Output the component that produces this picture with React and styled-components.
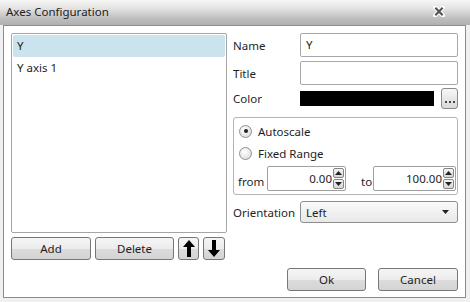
import React from "react";
import styled, { createGlobalStyle } from "styled-components";

const Global = createGlobalStyle`
  html, body { margin: 0; padding: 0; background: #f0f0f0; }
  body { font-family: "Noto Sans", "Open Sans", sans-serif; font-size: 11.5px; color: #1e1e1e; }
  * { box-sizing: border-box; }
`;

const Window = styled.div`
  width: 470px;
  height: 302px;
  display: flex;
  flex-direction: column;
  background: #f0f0f0;
`;

const TitleBar = styled.div`
  height: 25px;
  display: flex;
  align-items: center;
  justify-content: space-between;
  padding: 0 25px 2px 6px;
  background: linear-gradient(#f7f7f7 0%, #e2e2e2 35%, #bdbdbd 75%, #b0b0b0 100%);
  color: #222;
`;

const Body = styled.div`
  margin: 0 0 0 3px;
  width: 463px;
  height: 273px;
  border: 1px solid #8c8c8c;
  background: #fff;
  padding: 7px 7px 6px 7px;
  display: grid;
  grid-template-columns: 216px minmax(0, 1fr);
  column-gap: 6px;
`;

const LeftCol = styled.div`
  display: flex;
  flex-direction: column;
  gap: 4px;
`;

const ListBox = styled.div`
  height: 200px;
  border: 1px solid #a5a5a5;
  border-radius: 2px;
  padding: 1px;
`;

const ListItem = styled.div`
  height: 22px;
  line-height: 22px;
  padding-left: 4px;
  background: ${(p) => (p.$selected ? "#cbe3ec" : "transparent")};
  border-radius: 2px;
`;

const ButtonRow = styled.div`
  display: flex;
  gap: 4px;
`;

const Button = styled.button`
  width: ${(p) => p.$w}px;
  height: 23px;
  padding: 0;
  border: 1px solid #777;
  border-radius: 3px;
  background: linear-gradient(#f5f5f5 0%, #ececec 50%, #dcdcdc 51%, #d4d4d4 100%);
  font-family: inherit;
  font-size: 11.5px;
  color: #1e1e1e;
  display: flex;
  align-items: center;
  justify-content: center;
`;

const RightCol = styled.div`
  display: flex;
  flex-direction: column;
  min-width: 0;
`;

const FieldRow = styled.div`
  display: grid;
  grid-template-columns: 67px minmax(0, 1fr);
  align-items: center;
  height: ${(p) => p.$h}px;
  margin-bottom: ${(p) => p.$mb}px;
`;

const TextBox = styled.div`
  height: 24px;
  border: 1px solid #a8a8a8;
  border-radius: 2px;
  padding: 0 5px;
  line-height: 22px;
  background: #fff;
`;

const ColorCell = styled.div`
  display: flex;
  align-items: center;
  justify-content: space-between;
`;

const Swatch = styled.div`
  width: 134px;
  height: 15px;
  background: #000;
`;

const DotsButton = styled.div`
  width: 17px;
  height: 21px;
  border: 1px solid #8a8a8a;
  border-radius: 3px;
  background: linear-gradient(#f7f7f7, #d9d9d9);
  display: flex;
  align-items: flex-end;
  justify-content: center;
  padding-bottom: 5px;
  gap: 2px;
`;

const Dot = styled.span`
  width: 2px;
  height: 2px;
  background: #3a4a5a;
`;

const Group = styled.div`
  height: 78px;
  border: 1px solid #b4b4b4;
  border-radius: 3px;
  padding: 2px 0 0 4px;
  margin-bottom: 6px;
`;

const RadioRow = styled.div`
  display: flex;
  align-items: center;
  gap: 6px;
  height: 22px;
  padding-left: 1px;
`;

const RadioCircle = styled.span`
  width: 13px;
  height: 13px;
  border-radius: 50%;
  border: 1px solid #8f8f8f;
  background: radial-gradient(circle at 40% 35%, #ffffff 0%, #e6e6e6 60%, #cfcfcf 100%);
  display: flex;
  align-items: center;
  justify-content: center;
  &::after {
    content: "";
    width: 4px;
    height: 4px;
    border-radius: 50%;
    background: ${(p) => (p.$checked ? "#222" : "transparent")};
  }
`;

const RangeRow = styled.div`
  display: flex;
  align-items: flex-end;
  margin-top: 2px;
`;

const SmallLabel = styled.span`
  width: ${(p) => p.$w}px;
  flex: none;
  line-height: 18px;
`;

const SpinBox = styled.div`
  width: ${(p) => p.$w}px;
  flex: none;
  height: 25px;
  border: 1px solid #a0a0a0;
  border-radius: 2px;
  display: flex;
  align-items: center;
  justify-content: flex-end;
  margin-right: ${(p) => p.$mr || 0}px;
`;

const SpinText = styled.span`
  padding-right: 1px;
`;

const SpinButtons = styled.div`
  display: flex;
  flex-direction: column;
  gap: 1px;
  margin-right: 1px;
`;

const SpinBtn = styled.div`
  width: 11px;
  height: 10px;
  border: 1px solid #858585;
  border-radius: 2px;
  background: linear-gradient(#f5f5f5, #d6d6d6);
  display: flex;
  align-items: center;
  justify-content: center;
`;

const Combo = styled.div`
  height: 22px;
  border: 1px solid #8e8e8e;
  border-radius: 3px;
  background: linear-gradient(#fafafa, #e8e8e8);
  display: flex;
  align-items: center;
  justify-content: space-between;
  padding: 0 8px 0 5px;
`;

const Footer = styled.div`
  margin-top: auto;
  display: flex;
  justify-content: flex-end;
  gap: 12px;
`;

const Tri = ({ up }) => (
  <svg width="7" height="4" viewBox="0 0 7 4">
    <path d={up ? "M0 4 L3.5 0 L7 4 Z" : "M0 0 L3.5 4 L7 0 Z"} fill="#222" />
  </svg>
);

const Arrow = ({ down }) => (
  <svg width="12" height="17" viewBox="0 0 12 17">
    <path
      d="M6 0 L12 7 L8 7 L8 17 L4 17 L4 7 L0 7 Z"
      fill="#000"
      transform={down ? "rotate(180 6 8.5)" : undefined}
    />
  </svg>
);

const CloseX = () => (
  <svg width="12" height="11" viewBox="0 0 12 11">
    <path d="M2 1.5 L10 9.5 M10 1.5 L2 9.5" stroke="#fff" strokeWidth="4.2" strokeLinecap="square" />
    <path d="M2.3 1.8 L9.7 9.2 M9.7 1.8 L2.3 9.2" stroke="#555" strokeWidth="2.2" />
  </svg>
);

export default function App() {
  return (
    <>
      <Global />
      <Window>
        <TitleBar>
          <span>Axes Configuration</span>
          <CloseX />
        </TitleBar>
        <Body>
          <LeftCol>
            <ListBox>
              <ListItem $selected>Y</ListItem>
              <ListItem>Y axis 1</ListItem>
            </ListBox>
            <ButtonRow>
              <Button $w={80}>Add</Button>
              <Button $w={79}>Delete</Button>
              <Button $w={21}><Arrow /></Button>
              <Button $w={22}><Arrow down /></Button>
            </ButtonRow>
          </LeftCol>
          <RightCol>
            <FieldRow $h={24} $mb={4}>
              <span>Name</span>
              <TextBox>Y</TextBox>
            </FieldRow>
            <FieldRow $h={24} $mb={3}>
              <span>Title</span>
              <TextBox />
            </FieldRow>
            <FieldRow $h={21} $mb={8}>
              <span>Color</span>
              <ColorCell>
                <Swatch />
                <DotsButton><Dot /><Dot /><Dot /></DotsButton>
              </ColorCell>
            </FieldRow>
            <Group>
              <RadioRow><RadioCircle $checked />Autoscale</RadioRow>
              <RadioRow><RadioCircle />Fixed Range</RadioRow>
              <RangeRow>
                <SmallLabel $w={29}>from</SmallLabel>
                <SpinBox $w={79} $mr={15}>
                  <SpinText>0.00</SpinText>
                  <SpinButtons>
                    <SpinBtn><Tri up /></SpinBtn>
                    <SpinBtn><Tri /></SpinBtn>
                  </SpinButtons>
                </SpinBox>
                <SmallLabel $w={12}>to</SmallLabel>
                <SpinBox $w={83}>
                  <SpinText>100.00</SpinText>
                  <SpinButtons>
                    <SpinBtn><Tri up /></SpinBtn>
                    <SpinBtn><Tri /></SpinBtn>
                  </SpinButtons>
                </SpinBox>
              </RangeRow>
            </Group>
            <FieldRow $h={22} $mb={0}>
              <span>Orientation</span>
              <Combo>
                <span>Left</span>
                <Tri />
              </Combo>
            </FieldRow>
            <Footer>
              <Button $w={79}>Ok</Button>
              <Button $w={80}>Cancel</Button>
            </Footer>
          </RightCol>
        </Body>
      </Window>
    </>
  );
}
